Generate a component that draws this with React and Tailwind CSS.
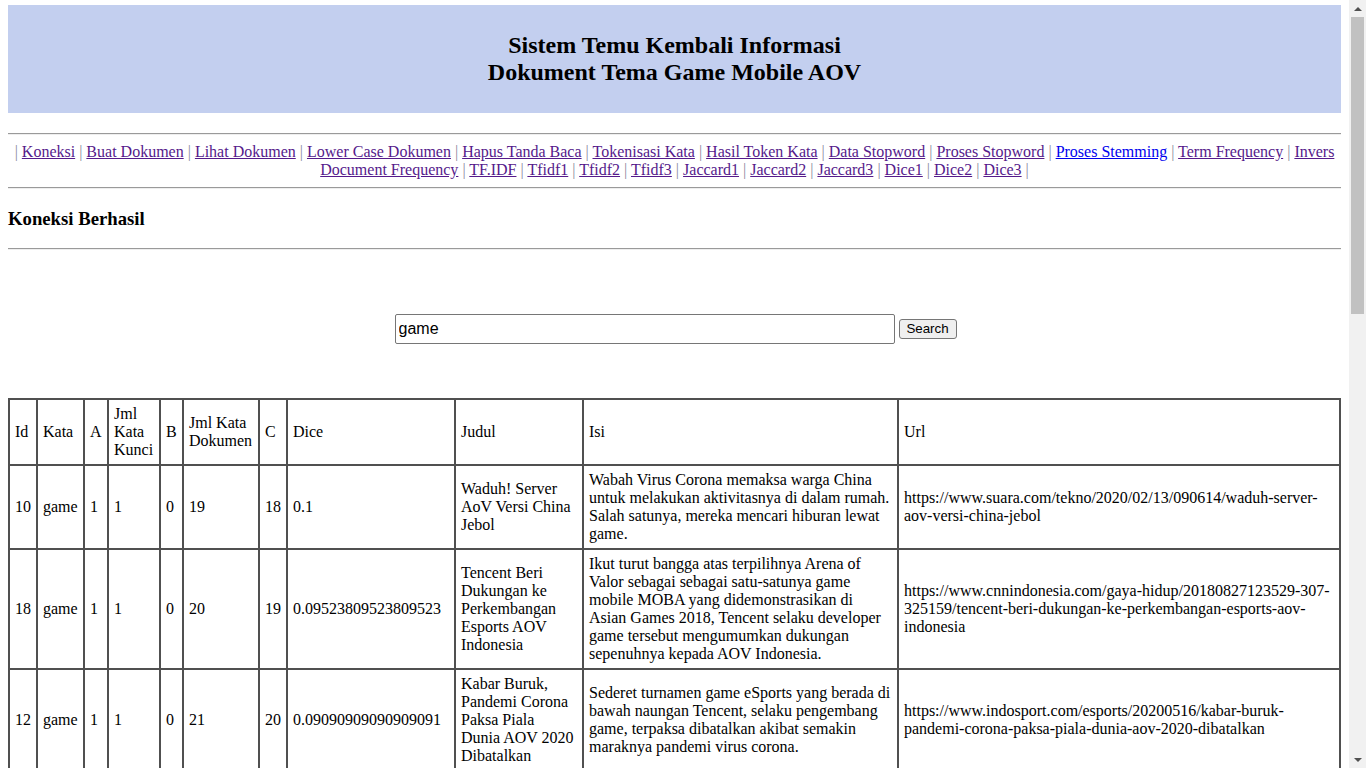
import React from 'react'

const menu = [
  'Koneksi', 'Buat Dokumen', 'Lihat Dokumen', 'Lower Case Dokumen', 'Hapus Tanda Baca',
  'Tokenisasi Kata', 'Hasil Token Kata', 'Data Stopword', 'Proses Stopword', 'Proses Stemming',
  'Term Frequency', 'Invers Document Frequency', 'TF.IDF', 'Tfidf1', 'Tfidf2', 'Tfidf3',
  'Jaccard1', 'Jaccard2', 'Jaccard3', 'Dice1', 'Dice2', 'Dice3',
]

const rows = [
  {
    id: 10, a: 1, kunci: 1, b: 0, dok: 19, c: 18, dice: '0.1',
    judul: 'Waduh! Server AoV Versi China Jebol',
    isi: 'Wabah Virus Corona memaksa warga China untuk melakukan aktivitasnya di dalam rumah. Salah satunya, mereka mencari hiburan lewat game.',
    url: 'https://www.suara.com/tekno/2020/02/13/090614/waduh-server-aov-versi-china-jebol',
  },
  {
    id: 18, a: 1, kunci: 1, b: 0, dok: 20, c: 19, dice: '0.09523809523809523',
    judul: 'Tencent Beri Dukungan ke Perkembangan Esports AOV Indonesia',
    isi: 'Ikut turut bangga atas terpilihnya Arena of Valor sebagai sebagai satu-satunya game mobile MOBA yang didemonstrasikan di Asian Games 2018, Tencent selaku developer game tersebut mengumumkan dukungan sepenuhnya kepada AOV Indonesia.',
    url: 'https://www.cnnindonesia.com/gaya-hidup/20180827123529-307-325159/tencent-beri-dukungan-ke-perkembangan-esports-aov-indonesia',
  },
  {
    id: 12, a: 1, kunci: 1, b: 0, dok: 21, c: 20, dice: '0.09090909090909091',
    judul: 'Kabar Buruk, Pandemi Corona Paksa Piala Dunia AOV 2020 Dibatalkan',
    isi: 'Sederet turnamen game eSports yang berada di bawah naungan Tencent, selaku pengembang game, terpaksa dibatalkan akibat semakin maraknya pandemi virus corona.',
    url: 'https://www.indosport.com/esports/20200516/kabar-buruk-pandemi-corona-paksa-piala-dunia-aov-2020-dibatalkan',
  },
  {
    id: 3, a: 1, kunci: 1, b: 0, dok: 22, c: 21, dice: '0.08695652173913043',
    judul: 'Arena of Valor Hadirkan Hero Baru untuk Pemain Indonesia',
    isi: 'Game mobile Arena of Valor kembali menghadirkan hero baru untuk para pemainnya di Indonesia, lengkap dengan skin dan event khusus selama bulan ini.',
    url: 'https://www.suara.com/tekno/2020/03/02/101500/arena-of-valor-hadirkan-hero-baru-untuk-pemain-indonesia',
  },
  {
    id: 7, a: 1, kunci: 1, b: 0, dok: 23, c: 22, dice: '0.08333333333333333',
    judul: 'Turnamen AOV Star League Resmi Digelar',
    isi: 'Turnamen game AOV Star League resmi digelar dan diikuti oleh tim-tim esports terbaik di Indonesia dengan total hadiah ratusan juta rupiah.',
    url: 'https://www.indosport.com/esports/20200210/turnamen-aov-star-league-resmi-digelar',
  },
  {
    id: 21, a: 1, kunci: 1, b: 0, dok: 24, c: 23, dice: '0.08',
    judul: 'Update Terbaru Game AOV Hadirkan Mode Baru',
    isi: 'Garena merilis update terbaru untuk game Arena of Valor dengan sejumlah perbaikan, penyesuaian hero dan fitur baru yang bisa dinikmati para pemain.',
    url: 'https://www.cnnindonesia.com/teknologi/20200405111203-185-490128/update-terbaru-game-aov-hadirkan-mode-baru',
  },
  {
    id: 5, a: 1, kunci: 1, b: 0, dok: 25, c: 24, dice: '0.07692307692307693',
    judul: 'Tim Indonesia Juara Turnamen AOV Internasional',
    isi: 'Tim esports asal Indonesia berhasil menjadi juara dalam turnamen game AOV tingkat internasional setelah mengalahkan tim dari Thailand di babak final.',
    url: 'https://www.indosport.com/esports/20191120/tim-indonesia-juara-turnamen-aov-internasional',
  },
  {
    id: 15, a: 1, kunci: 1, b: 0, dok: 26, c: 25, dice: '0.07407407407407407',
    judul: 'Garena Umumkan Kompetisi AOV Kampus',
    isi: 'Garena mengumumkan kompetisi game AOV untuk mahasiswa di seluruh Indonesia sebagai upaya mengembangkan ekosistem esports di kalangan kampus.',
    url: 'https://www.suara.com/tekno/2019/10/08/143022/garena-umumkan-kompetisi-aov-kampus',
  },
]

function Hr() {
  return <div className="h-[2px] border-t border-t-[#9a9a9a] border-b border-b-[#eeeeee]" />
}

function Td({ children, className = '' }) {
  return (
    <td className={`border border-[#505050] px-[5px] py-[5px] leading-[18px] align-middle text-left font-normal ${className}`}>
      {children}
    </td>
  )
}

function Scrollbar() {
  return (
    <div className="flex h-screen w-[17px] shrink-0 flex-col bg-[#f1f1f1]">
      <div className="flex h-[17px] items-center justify-center">
        <div className="h-0 w-0 border-x-[4px] border-b-[4px] border-x-transparent border-b-[#505050]" />
      </div>
      <div className="mx-[2px] h-[297px] bg-[#c1c1c1]" />
      <div className="flex-1" />
      <div className="flex h-[17px] items-center justify-center">
        <div className="h-0 w-0 border-x-[4px] border-t-[4px] border-x-transparent border-t-[#505050]" />
      </div>
    </div>
  )
}

export default function App() {
  return (
    <div className="flex h-screen overflow-hidden bg-white font-['Liberation_Serif','Times_New_Roman',serif] text-[16px] text-black">
      <div className="min-w-0 flex-1 overflow-y-auto px-[8px] pb-[8px] [scrollbar-width:none]">
        {/* Header */}
        <div className="mt-[5px] h-[108px] bg-[#c3cfef] pt-[27px] text-center text-[24px] font-bold leading-[27px]">
          Sistem Temu Kembali Informasi
          <br />
          Dokument Tema Game Mobile AOV
        </div>

        <div className="mt-[20px]">
          <Hr />
        </div>

        {/* Menu */}
        <div className="my-[8px] text-center leading-[18px]">
          <span className="text-[#8a8a9c]">| </span>
          {menu.map(m => (
            <React.Fragment key={m}>
              <a href="#" className={`underline ${m === 'Proses Stemming' ? 'text-[#0000ee]' : 'text-[#551a8b]'}`}>{m}</a>
              <span className="text-[#8a8a9c]"> | </span>
            </React.Fragment>
          ))}
        </div>

        <Hr />

        <h3 className="my-[19px] text-[18.72px] font-bold leading-[21px]">Koneksi Berhasil</h3>

        <Hr />

        {/* Search */}
        <div className="mt-[64px] flex items-center justify-center gap-[4px] pl-[2px] font-['Liberation_Sans',Arial,sans-serif]">
          <input
            type="text"
            defaultValue="game"
            className="h-[30px] w-[500px] rounded-[2px] border border-[#767676] px-[3px] text-[16px] text-black outline-none"
          />
          <button className="h-[20px] w-[58px] rounded-[3px] border border-[#767676] bg-[#efefef] text-[13.33px] leading-[16px] text-black">
            Search
          </button>
        </div>

        {/* Table */}
        <table className="mt-[54px] w-full table-fixed border-separate border-spacing-0 border border-[#505050]">
          <thead>
            <tr>
              <Td className="w-[28px]">Id</Td>
              <Td className="w-[47px]">Kata</Td>
              <Td className="w-[24px]">A</Td>
              <Td className="w-[52px]">Jml Kata Kunci</Td>
              <Td className="w-[23px]">B</Td>
              <Td className="w-[76px]">Jml Kata Dokumen</Td>
              <Td className="w-[28px]">C</Td>
              <Td className="w-[168px]">Dice</Td>
              <Td className="w-[128px]">Judul</Td>
              <Td className="w-[315px]">Isi</Td>
              <Td>Url</Td>
            </tr>
          </thead>
          <tbody>
            {rows.map(r => (
              <tr key={r.id}>
                <Td>{r.id}</Td>
                <Td>game</Td>
                <Td>{r.a}</Td>
                <Td>{r.kunci}</Td>
                <Td>{r.b}</Td>
                <Td>{r.dok}</Td>
                <Td>{r.c}</Td>
                <Td>{r.dice}</Td>
                <Td>{r.judul}</Td>
                <Td>{r.isi}</Td>
                <Td className="break-words">{r.url}</Td>
              </tr>
            ))}
          </tbody>
        </table>
      </div>
      <Scrollbar />
    </div>
  )
}
